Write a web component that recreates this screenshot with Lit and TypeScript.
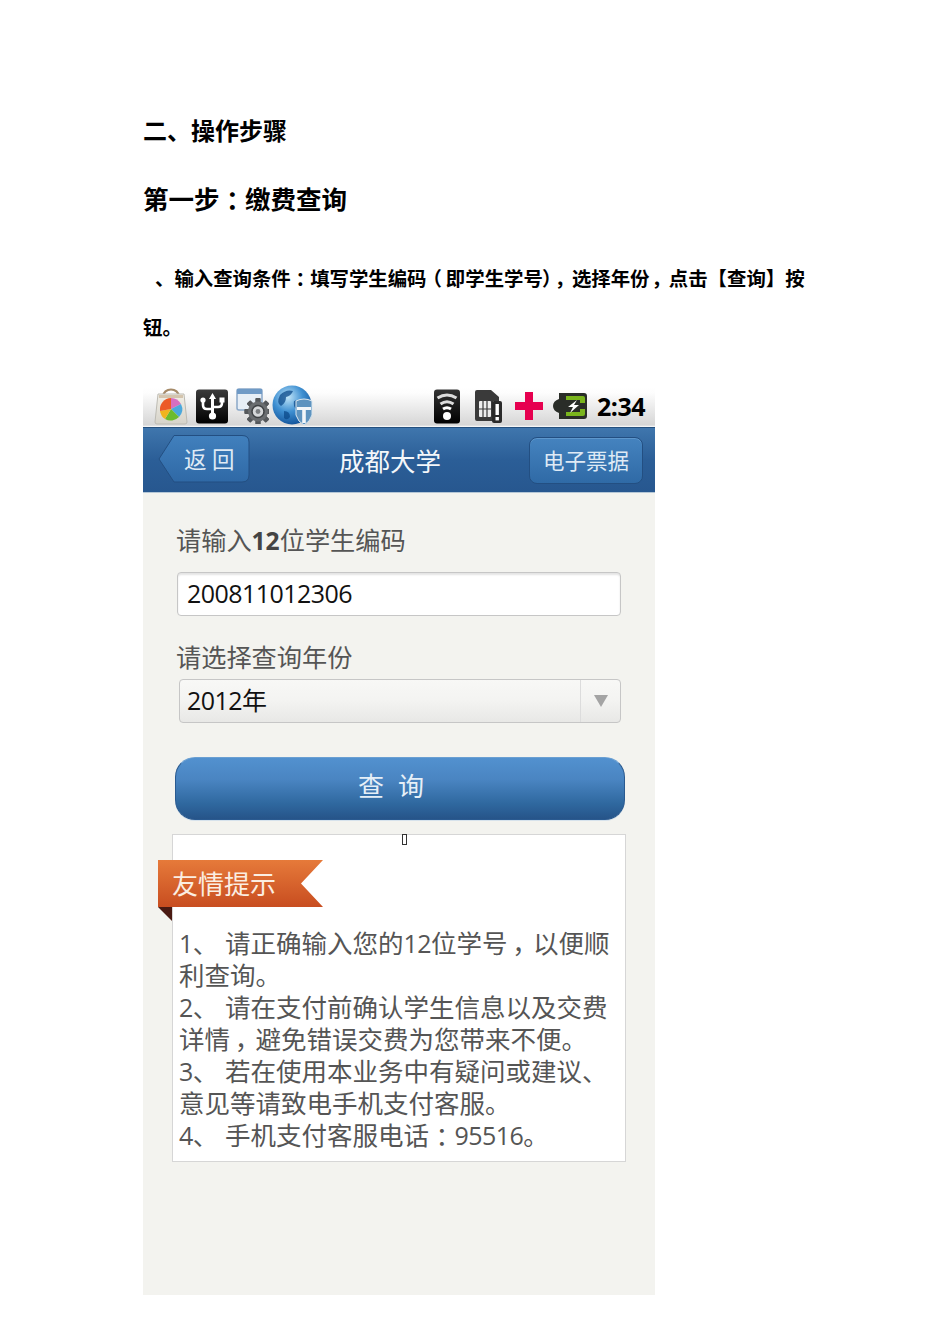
import { LitElement, html, css, svg, unsafeCSS } from "lit";
import { customElement } from "lit/decorators.js";

const CJK = unsafeCSS(`"Noto Sans CJK SC", sans-serif`);
const LATIN = unsafeCSS(`"Open Sans", "Noto Sans CJK SC", sans-serif`);

const bag = svg`<svg width="36" height="38" viewBox="0 0 36 38">
  <defs><linearGradient id="bagG" x1="0" y1="0" x2="0" y2="1"><stop offset="0" stop-color="#f2efe6"/><stop offset="1" stop-color="#d6d3ca"/></linearGradient></defs>
  <path d="M10 10C10 0 26 0 26 10" fill="none" stroke="#a58a68" stroke-width="2.200"/>
  <path d="M5 7H31L34 35Q34 37 32 37H4Q2 37 2 35Z" fill="url(#bagG)" stroke="#bdbbb3"/>
  <path d="M6 8H30L30 11H6Z" fill="#b89c78" opacity="0.500"/>
  <path d="M18 11A11.500 11.500 0 0 1 28 17L18 22Z" fill="#d56fc0"/>
  <path d="M28 17A11.500 11.500 0 0 1 26 30L18 22Z" fill="#4ba8dc"/>
  <path d="M26 30A11.500 11.500 0 0 1 12 32L18 22Z" fill="#6cbb2e"/>
  <path d="M12 32A11.500 11.500 0 0 1 7 24L18 22Z" fill="#f0b41e"/>
  <path d="M7 24A11.500 11.500 0 0 1 18 11L18 22Z" fill="#ec5a26"/>
</svg>`;

const usb = svg`<svg width="33" height="35" viewBox="0 0 33 35">
  <defs><linearGradient id="blk" x1="0" y1="0" x2="0" y2="1"><stop offset="0" stop-color="#3a3a3a"/><stop offset="1" stop-color="#000"/></linearGradient></defs>
  <rect width="32" height="34" y="0.500" rx="3" fill="url(#blk)"/>
  <path d="M16.500 4L20 10H18V26H15V10H13Z" fill="#fff"/>
  <circle cx="16.500" cy="27" r="3.600" fill="#fff"/>
  <path d="M7 12V16Q7 20 11 20H16M26 12V14Q26 18 22 18H17" fill="none" stroke="#fff" stroke-width="2.600"/>
  <circle cx="7" cy="11" r="2.600" fill="#fff"/><rect x="23.500" y="8.500" width="5" height="5" fill="#fff"/>
</svg>`;

const gearTeeth = [0, 45, 90, 135, 180, 225, 270, 315].map(
  (a) => svg`<rect x="19.500" y="10" width="5" height="27" rx="1" fill="#55585b" transform="rotate(${a} 22 23.500)"/>`
);
const settings = svg`<svg width="33" height="36" viewBox="0 0 33 36">
  <rect x="1" y="1" width="25" height="21" rx="2" fill="#e6eef6" stroke="#8aa8c8" stroke-width="1.500"/>
  <rect x="1" y="1" width="25" height="5" fill="#6f9ac6"/>
  ${gearTeeth}
  <circle cx="22" cy="23.500" r="10" fill="#6a6d70"/>
  <circle cx="22" cy="23.500" r="6" fill="#d6d8da" stroke="#3f4245" stroke-width="1.500"/>
  <circle cx="22" cy="23.500" r="2.400" fill="#7c7f82"/>
</svg>`;

const globe = svg`<svg width="43" height="42" viewBox="0 0 43 42">
  <defs><radialGradient id="gl" cx="0.400" cy="0.300" r="0.750"><stop offset="0" stop-color="#bfe4f8"/><stop offset="0.500" stop-color="#3f90d2"/><stop offset="1" stop-color="#0f4f96"/></radialGradient></defs>
  <circle cx="20" cy="20" r="19.500" fill="url(#gl)"/>
  <path d="M8 10Q14 4 21 6Q19 11 14 12Q14 18 9 21Q4 18 8 10ZM22 16Q28 14 31 18Q29 24 24 24Q21 21 22 16ZM12 26Q18 26 18 32Q15 36 12 33Z" fill="#0c4a8a" opacity="0.750"/>
  <path d="M24 16Q32 12 40 16V30Q38 37 32 40Q26 37 24 30Z" fill="#5d93bf" stroke="#dbe6ee"/>
  <path d="M25 22H39V25H33.800V38H30.200V25H25Z" fill="#f2f6f9"/>
</svg>`;

const wifi = svg`<svg width="27" height="35" viewBox="0 0 27 35">
  <defs><linearGradient id="blk2" x1="0" y1="0" x2="0" y2="1"><stop offset="0" stop-color="#333"/><stop offset="1" stop-color="#000"/></linearGradient></defs>
  <rect y="0.500" width="26" height="34" rx="3" fill="url(#blk2)"/>
  <path d="M3.500 9Q13 3 22.500 9M6.500 15Q13 10.500 19.500 15" fill="none" stroke="#dcdcdc" stroke-width="3"/>
  <path d="M9 20Q13 17.500 17 20" fill="none" stroke="#fff" stroke-width="3"/>
  <circle cx="13" cy="27" r="4" fill="#fff"/>
</svg>`;

const sim = svg`<svg width="29" height="35" viewBox="0 0 29 35">
  <path d="M3 1H17L25 8V12H19V32H3Q1 32 1 30V3Q1 1 3 1Z" fill="#3a3a3a"/>
  <rect x="5" y="12" width="12" height="16" rx="1" fill="#eee"/>
  <path d="M9 12V28M13 12V28M5 20H17" stroke="#3a3a3a" stroke-width="1.200"/>
  <rect x="18" y="12" width="10" height="22" rx="2" fill="#2a2a2a"/>
  <rect x="21.500" y="15" width="3.400" height="11" fill="#fff"/><rect x="21.500" y="28" width="3.400" height="3.400" fill="#fff"/>
</svg>`;

const plus = svg`<svg width="28" height="28" viewBox="0 0 28 28">
  <path d="M10 0H18V10H28V18H18V28H10V18H0V10H10Z" fill="#e6004f"/>
</svg>`;

const battery = svg`<svg width="34" height="26" viewBox="0 0 34 26">
  <path d="M6 0H31Q34 0 34 3V23Q34 26 31 26H6V20Q0 18 0 13Q0 8 6 6Z" fill="#2a2d28"/>
  <path d="M13 3H30Q32 3 32 5V10H27V7H13ZM13 19H27V16H32V21Q32 23 30 23H13Z" fill="#7ab51d"/>
  <path d="M24 7L15 14H20L17 20L26 12H21Z" fill="#fff"/>
</svg>`;

const colon = () => html`<span class="k">：</span>`;
const comma = () => html`<span class="k">，</span>`;
const open = () => html`<span class="k">（</span>`;
const close = () => html`<span class="k half">）</span>`;
const n = (c: string) => html`<span class="n">${c}</span>`;

@customElement("app-root")
export class AppRoot extends LitElement {
  static styles = css`
    :host { display: block; width: 950px; height: 1344px; background: #fff; box-sizing: border-box; padding: 112px 0 0 143px; font-family: ${CJK}; overflow: hidden; color: #000; }
    .k { font-family: ${CJK}; font-feature-settings: "palt"; line-height: 1; display: inline-block; width: 1em; text-align: center; }
    .k.half { width: 0.5em; }
    .n { font-family: "Open Sans", sans-serif; font-size: 25px; letter-spacing: -0.550px; }
    .h1 { font-weight: 700; font-size: 24px; line-height: 35px; }
    .h2 { font-weight: 700; font-size: 25.500px; line-height: 37px; height: 37px; margin-top: 32px; }
    .para { font-weight: 700; font-size: 19.400px; line-height: 49px; margin-top: 37px; width: 664px; }
    .para .line { height: 49px; white-space: nowrap; }
    .para .indent { padding-left: 12px; }
    .phone { width: 512px; height: 908px; margin-top: 36px; background: #f3f3ef; display: flex; flex-direction: column; }
    .status { height: 40px; flex: none; background: linear-gradient(#ffffff, #fdfdfd 15%, #d6d6d6 95%, #ffffff); display: flex; align-items: center; box-sizing: border-box; padding: 0 10px 2px 10px; }
    .status svg { display: block; flex: none; }
    .icons-l { display: flex; align-items: center; gap: 7px; }
    .icons-l .tight { margin-left: -4px; }
    .icons-r { margin-left: auto; display: flex; align-items: center; }
    .s1 { width: 13px; } .s2 { width: 12px; } .s3 { width: 10px; }
    .time { font-family: "Open Sans", sans-serif; font-weight: 700; font-size: 25px; line-height: 30px; margin-left: 10px; letter-spacing: -0.500px; }
    .header { height: 66px; flex: none; background: linear-gradient(#3f76ad, #2b5e97 50%, #27578f); border-top: 1px solid #24507f; border-bottom: 1px solid #b5c7d6; box-sizing: border-box; display: flex; align-items: center; justify-content: space-between; padding: 0 12px 0 15px; position: relative; color: #eef4fa; }
    .title { position: absolute; left: 0; right: 18px; text-align: center; font-size: 25.500px; line-height: 36px; top: 14px; color: #f4f7fa; }
    .back { position: relative; width: 92px; height: 48px; margin-top: -2px; }
    .back svg { position: absolute; inset: 0; }
    .back span { position: absolute; left: 26px; top: 0; line-height: 46px; font-size: 22.500px; letter-spacing: 5.500px; color: #dfeaf5; white-space: nowrap; }
    .receipt { width: 114px; height: 47px; box-sizing: border-box; border: 1px solid #234f82; border-radius: 8px; background: linear-gradient(#4583bf, #2f6aa6); box-shadow: inset 0 1px 0 #5e97cc; font-size: 21.500px; line-height: 44px; text-align: center; color: #dfeaf5; }
    .body { padding: 0 0 0 29px; flex: 1; }
    .label { font-family: ${LATIN}; font-size: 25.200px; line-height: 36px; height: 36px; color: #555; margin-left: 4px; white-space: nowrap; }
    .label b { font-weight: 700; color: #444; font-size: 24.600px; }
    .l1 { margin-top: 29px; }
    .input { width: 444px; height: 44px; margin: 14px 0 0 5px; box-sizing: border-box; border: 1px solid #c6c6c6; border-radius: 4px; background: #fff; box-shadow: inset 0 2px 2px #e4e4e4; font-family: "Open Sans", sans-serif; font-size: 25px; letter-spacing: -0.550px; line-height: 40px; padding-left: 9px; color: #111; }
    .l2 { margin-top: 23px; height: 37px; }
    .select { width: 442px; height: 44px; margin: 3px 0 0 7px; box-sizing: border-box; border: 1px solid #c6c6c6; border-radius: 4px; background: linear-gradient(#f8f8f6, #f4f4f2 45%, #e8e8e6); display: flex; font-family: ${LATIN}; font-size: 25px; line-height: 40px; padding-left: 7px; color: #111; }
    .select .v { flex: 1; letter-spacing: -0.550px; }
    .select .arrow { width: 39px; border-left: 1px solid #dcdcdc; display: flex; align-items: center; justify-content: center; }
    .select .arrow i { display: block; width: 0; height: 0; border-left: 7px solid transparent; border-right: 7px solid transparent; border-top: 12px solid #a4a4a4; margin-top: -1px; }
    .search { width: 450px; height: 63px; margin: 34px 0 0 3px; box-sizing: border-box; border-radius: 20px; border: 1px solid #2a5a90; border-top-color: #6a9fd2; background: linear-gradient(#5291cf, #4a85c2 35%, #2f689f 75%, #265489); box-shadow: 0 1px 0 #d6e2ec; color: #e6eff7; font-size: 26px; line-height: 53px; padding-left: 182px; letter-spacing: 14px; }
    .tips { position: relative; width: 454px; height: 328px; margin-top: 14px; box-sizing: border-box; border: 1px solid #d6d6d6; background: #fff; padding: 92px 0 0 6px; font-family: ${LATIN}; font-size: 25.500px; line-height: 32px; color: #555; }
    .tips p { margin: 0; height: 32px; white-space: nowrap; }
    .tips .num { display: inline-block; width: 46px; }
    .tofu { position: absolute; left: 229px; top: -1px; width: 3px; height: 9px; border: 1px solid #333; }
    .ribbon { position: absolute; left: -15px; top: 25px; width: 166px; height: 62px; }
    .ribbon svg { position: absolute; inset: 0; display: block; }
    .ribbon span { position: absolute; left: 14px; top: 4px; font-family: ${CJK}; font-size: 26px; line-height: 38px; color: #fbeee2; white-space: nowrap; }
  `;

  render() {
    return html`
      <div class="h1">二、操作步骤</div>
      <div class="h2">第一步${colon()}缴费查询</div>
      <div class="para">
        <div class="line indent">、输入查询条件${colon()}填写学生编码${open()}即学生学号${close()}${comma()}选择年份${comma()}点击【查询】按</div>
        <div class="line">钮。</div>
      </div>
      <div class="phone">
        <div class="status">
          <div class="icons-l">${bag}${usb}${settings}<span class="tight">${globe}</span></div>
          <div class="icons-r">
            ${wifi}<span class="s1"></span>${sim}<span class="s2"></span>${plus}<span class="s3"></span>${battery}
            <span class="time">2:34</span>
          </div>
        </div>
        <div class="header">
          <div class="title">成都大学</div>
          <div class="back">
            <svg width="92" height="48" viewBox="0 0 92 48">
              <defs><linearGradient id="bk" x1="0" y1="0" x2="0" y2="1"><stop offset="0" stop-color="#4180bd"/><stop offset="1" stop-color="#2f69a6"/></linearGradient></defs>
              <path d="M16 .5H84Q91 .5 91 7V40Q91 47 84 47H16L1 24Z" fill="url(#bk)" stroke="#234f82"/>
            </svg>
            <span>返回</span>
          </div>
          <div class="receipt">电子票据</div>
        </div>
        <div class="body">
          <div class="label l1">请输入<b>12</b>位学生编码</div>
          <div class="input">200811012306</div>
          <div class="label l2">请选择查询年份</div>
          <div class="select"><span class="v">2012年</span><span class="arrow"><i></i></span></div>
          <div class="search">查询</div>
          <div class="tips">
            <span class="tofu"></span>
            <div class="ribbon">
              <svg width="166" height="62" viewBox="0 0 166 62">
                <defs><linearGradient id="rb" x1="0" y1="0" x2="0" y2="1"><stop offset="0" stop-color="#e67a3a"/><stop offset="1" stop-color="#c84d20"/></linearGradient></defs>
                <path d="M0 47H14V61Z" fill="#4a1a12"/>
                <path d="M0 0H165L143 23.500L165 47H0Z" fill="url(#rb)"/>
              </svg>
              <span>友情提示</span>
            </div>
            <p><span class="num">${n("1")}、</span>请正确输入您的${n("12")}位学号${comma()}以便顺</p>
            <p>利查询。</p>
            <p><span class="num">${n("2")}、</span>请在支付前确认学生信息以及交费</p>
            <p>详情${comma()}避免错误交费为您带来不便。</p>
            <p><span class="num">${n("3")}、</span>若在使用本业务中有疑问或建议、</p>
            <p>意见等请致电手机支付客服。</p>
            <p><span class="num">${n("4")}、</span>手机支付客服电话${colon()}${n("95516")}。</p>
          </div>
        </div>
      </div>
    `;
  }
}
